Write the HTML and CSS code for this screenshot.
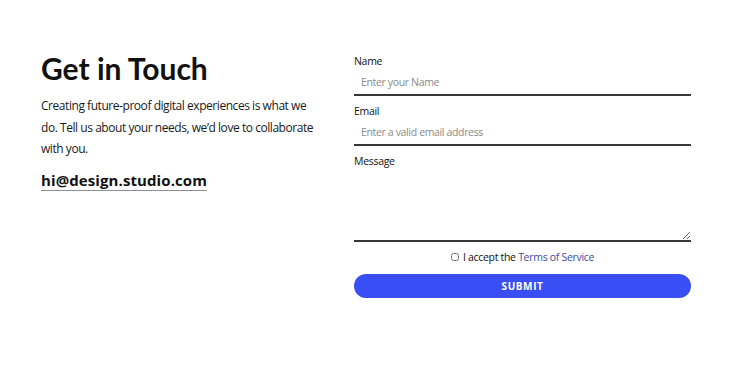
FILE: index.html
```html
<!DOCTYPE html>
<html lang="en">
<head>
<meta charset="utf-8">
<title>Get in Touch</title>
<link rel="stylesheet" href="styles.css">
</head>
<body>
<section class="contact">
  <div class="intro">
    <h1 class="title">Get in Touch</h1>
    <p class="lead">Creating future-proof digital experiences is what we do. Tell us about your needs, we’d love to collaborate with you.</p>
    <a class="mail" href="#">hi@design.studio.com</a>
  </div>
  <form class="form">
    <label class="field">
      <span class="label">Name</span>
      <input class="input" type="text" placeholder="Enter your Name">
    </label>
    <label class="field">
      <span class="label">Email</span>
      <input class="input" type="email" placeholder="Enter a valid email address">
    </label>
    <label class="field">
      <span class="label">Message</span>
      <textarea class="input area"></textarea>
    </label>
    <div class="terms">
      <input class="check" type="checkbox" id="tos">
      <label for="tos">I accept the <a class="link" href="#">Terms of Service</a></label>
    </div>
    <button class="submit" type="button">SUBMIT</button>
  </form>
</section>
</body>
</html>
```
FILE: styles.css
```css
* { box-sizing: border-box; }
html, body { margin: 0; background: #fff; }
body { font-family: "Open Sans", "Liberation Sans", sans-serif; color: #111; }

.contact {
  display: flex;
  padding: 52px 59px 0 41px;
  gap: 38px;
}
.intro { width: 275px; flex: none; }
.title {
  font-family: "Lato", "Inter", sans-serif;
  font-weight: 700;
  font-size: 30px;
  line-height: 1;
  margin: 1px 0 12px;
  color: #111;
}
.lead {
  font-size: 12px;
  letter-spacing: -0.45px;
  line-height: 21.5px;
  margin: 0 0 9px;
  color: #1a1a1a;
}
.mail {
  display: inline-block;
  font-weight: 700;
  font-size: 15px;
  color: #111;
  text-decoration: none;
  border-bottom: 1px solid #8a8f9a;
  line-height: 19px;
  letter-spacing: 0.1px;
}
.form { flex: 1; display: flex; flex-direction: column; margin-top: 2px; }
.field { display: flex; flex-direction: column; margin-bottom: 8px; }
.label { font-size: 10.5px; letter-spacing: -0.3px; line-height: 15px; color: #111; }
.input {
  border: 0;
  border-bottom: 2px solid #383838;
  font-family: inherit;
  font-size: 10.5px;
  letter-spacing: -0.35px;
  padding: 6px 7px;
  height: 27px;
  outline: none;
  background: transparent;
}
.input::placeholder { color: #8a8a8a; }
.area { height: 73px; resize: vertical; }
.terms {
  display: flex;
  justify-content: center;
  align-items: center;
  font-size: 10.5px;
  letter-spacing: -0.3px;
  margin: 0 0 10px;
  color: #111;
}
.check { width: 8px; height: 8px; margin: 0 4px 0 0; }
.link { color: #3d4a9e; text-decoration: none; }
.submit {
  height: 24px;
  border: 0;
  border-radius: 12px;
  background: #3a4ef5;
  color: #fff;
  font-family: inherit;
  font-weight: 700;
  font-size: 10px;
  letter-spacing: 0.6px;
}
```
